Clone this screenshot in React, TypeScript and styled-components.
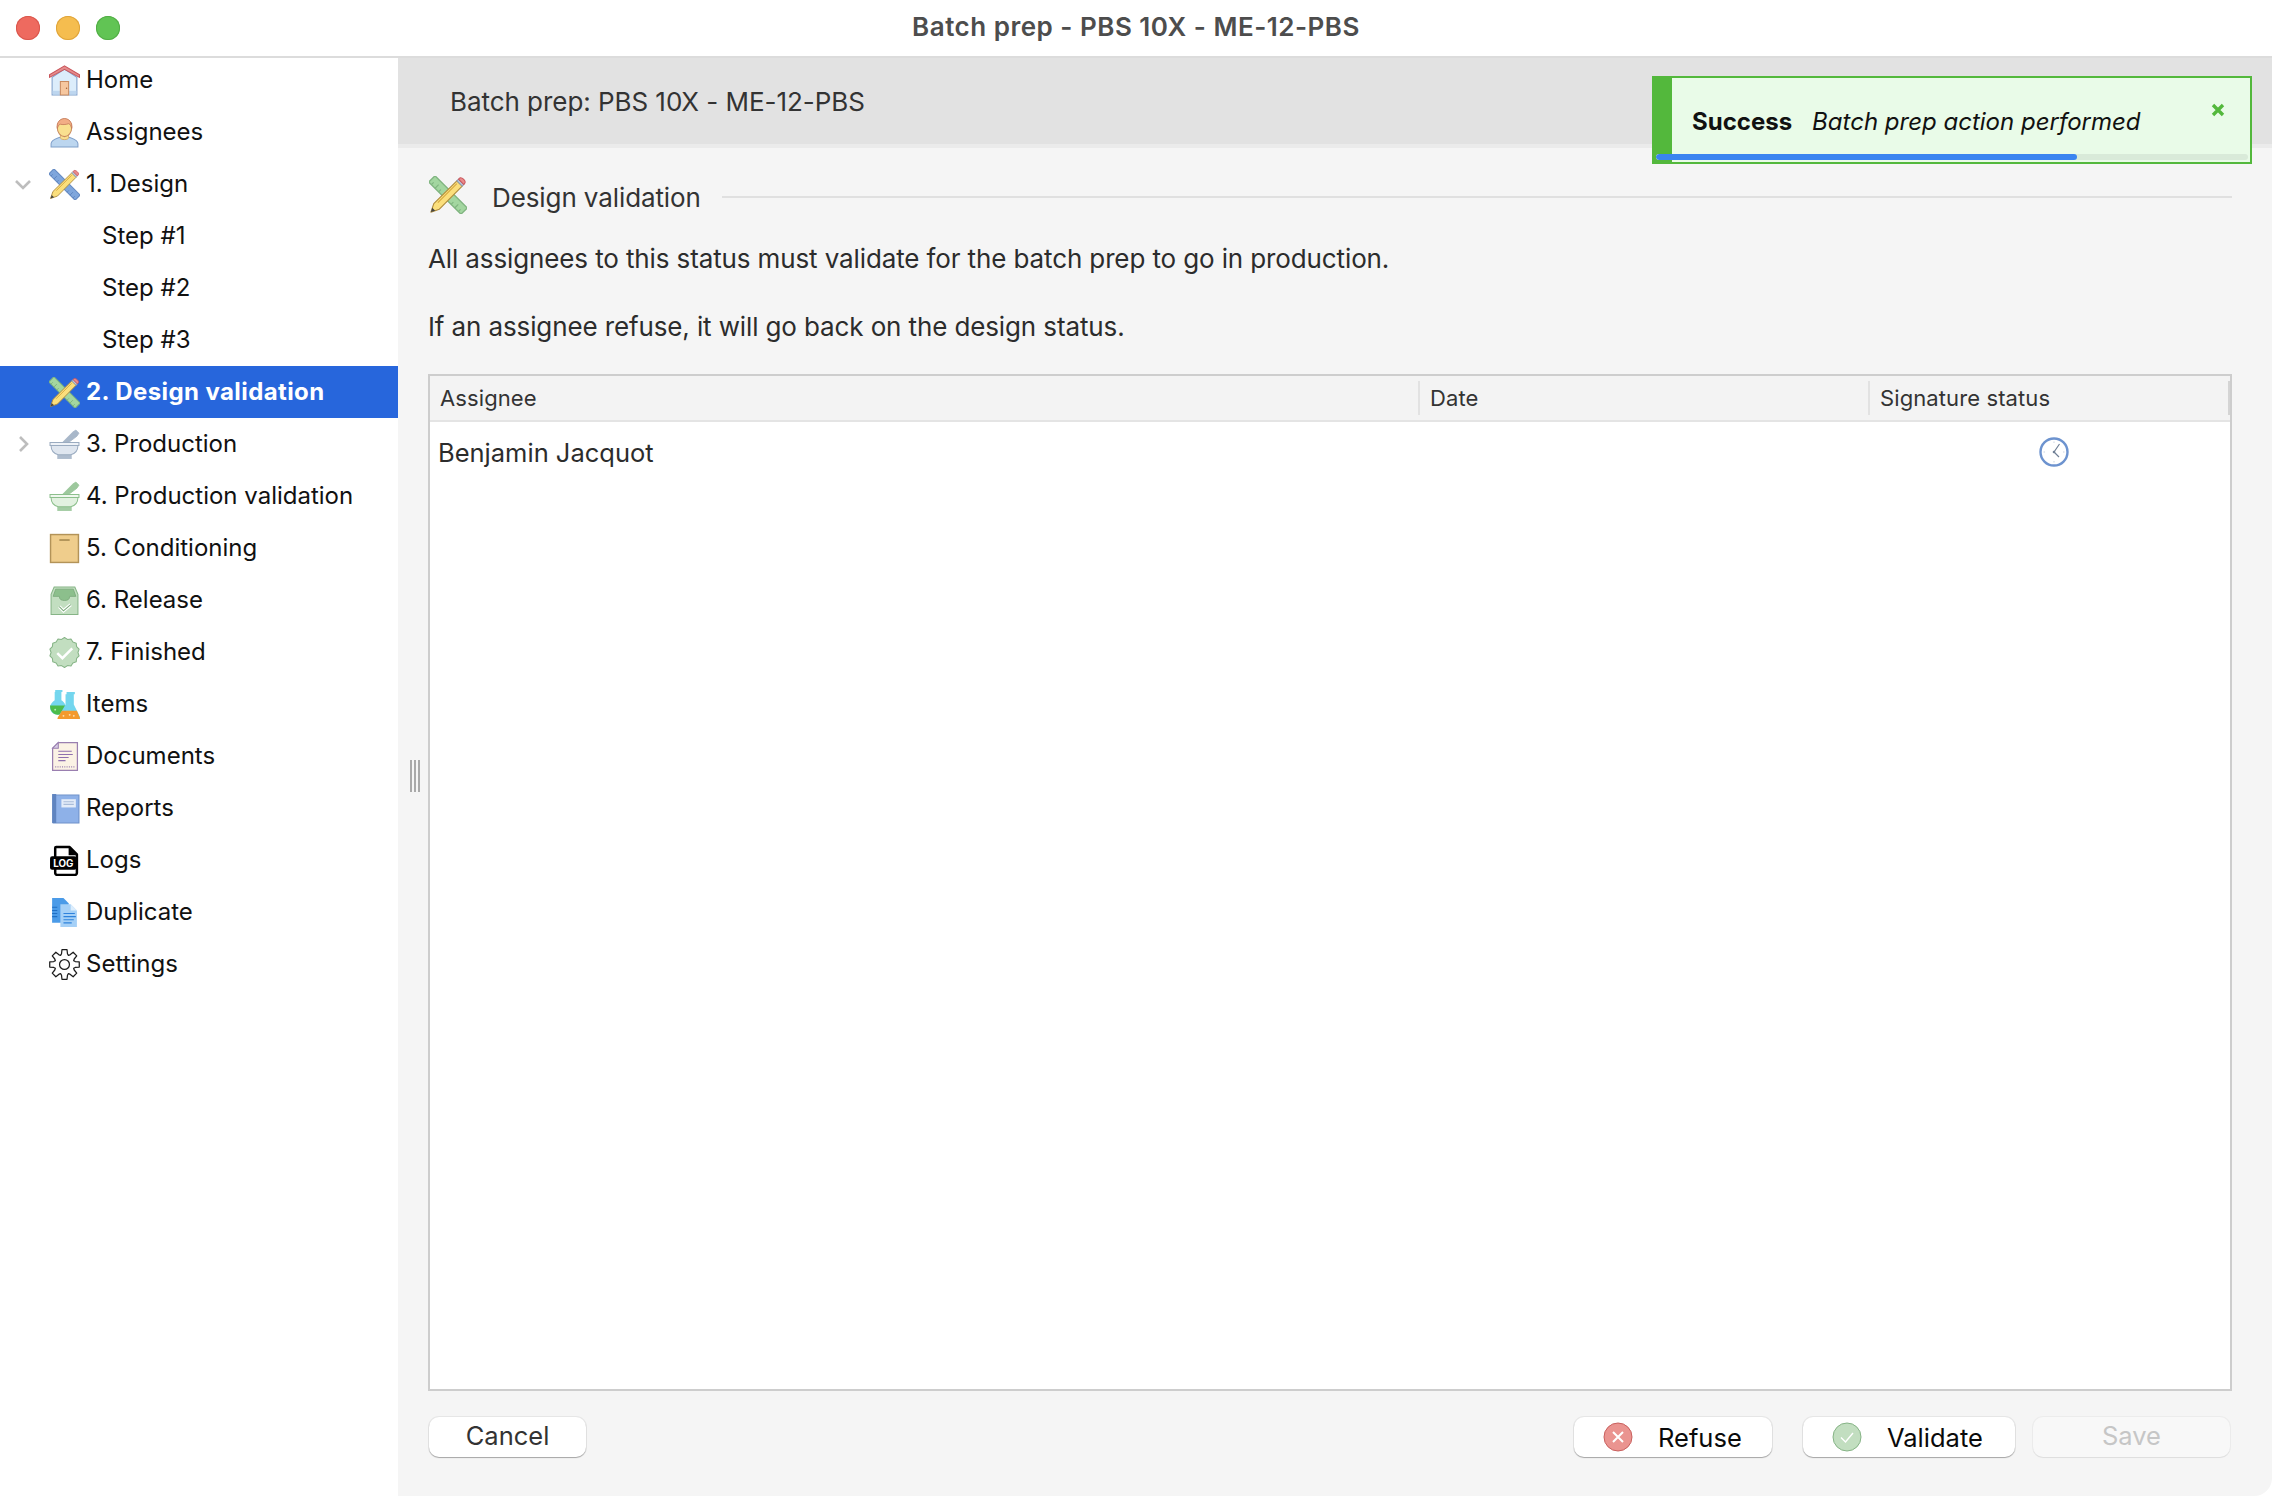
import React from "react";
import styled, { createGlobalStyle } from "styled-components";

const Global = createGlobalStyle`
  html, body { margin: 0; padding: 0; background: #fff; }
  body { font-family: Inter, "Liberation Sans", sans-serif; -webkit-font-smoothing: antialiased; }
`;

const Window = styled.div`
  position: relative;
  width: 2272px;
  height: 1496px;
  display: flex;
  flex-direction: column;
  overflow: hidden;
  background: #fff;
`;
const TitleBar = styled.header`
  flex: none;
  height: 56px;
  position: relative;
  display: flex;
  align-items: center;
  justify-content: center;
  box-sizing: content-box;
  background: #fff;
  border-bottom: 2px solid #dcdcdc;
`;
const Lights = styled.div`
  position: absolute;
  left: 16px;
  top: 16px;
  display: flex;
  gap: 16px;
`;
const Light = styled.span<{ $c: string; $b: string }>`
  width: 24px;
  height: 24px;
  border-radius: 50%;
  background: ${(p) => p.$c};
  box-shadow: inset 0 0 0 1px ${(p) => p.$b};
`;
const Title = styled.h1`
  margin: 0 0 3px;
  font-size: 26px;
  font-weight: 600;
  letter-spacing: 0.5px;
  color: #4d4d4d;
`;
const Body = styled.div`
  flex: 1;
  min-height: 0;
  display: flex;
`;
const Sidebar = styled.nav`
  flex: none;
  width: 398px;
  background: #fff;
`;
const Row = styled.div<{ $sel?: boolean }>`
  position: relative;
  height: 52px;
  display: flex;
  align-items: center;
  gap: 6px;
  padding-left: 49px;
  box-sizing: border-box;
  font-size: 24px;
  color: ${(p) => (p.$sel ? "#fff" : "#111")};
  font-weight: ${(p) => (p.$sel ? 700 : 400)};
  letter-spacing: ${(p) => (p.$sel ? "0.4px" : "0")};
  background: ${(p) => (p.$sel ? "#2766dc" : "transparent")};
  &:first-child {
    height: 48px;
    padding-bottom: 4px;
  }
`;
const Label = styled.span`
  padding-bottom: 1.5px;
`;
const StepRow = styled(Row)`
  padding-left: 102px;
`;
const Chevron = styled.svg`
  position: absolute;
  left: 13px;
  top: 16px;
  width: 20px;
  height: 20px;
  fill: none;
  stroke: #bdbdbd;
  stroke-width: 2.6;
`;
const Ico = styled.svg`
  flex: none;
  width: 31px;
  height: 31px;
`;
const Main = styled.main`
  position: relative;
  flex: 1;
  min-width: 0;
  display: flex;
  flex-direction: column;
  background: #f5f5f5;
  border-bottom-right-radius: 18px;
`;
const Header = styled.div`
  flex: none;
  height: 86px;
  display: flex;
  align-items: center;
  padding-left: 52px;
  background: #e2e2e2;
  border-bottom: 4px solid #ebebeb;
  font-size: 26px;
  letter-spacing: -0.05px;
  color: #333;
`;
const Content = styled.div`
  flex: 1;
  min-height: 0;
  display: flex;
  flex-direction: column;
  padding: 29px 40px 39px 30px;
`;
const Section = styled.div`
  flex: none;
  display: flex;
  align-items: center;
  height: 36px;
`;
const SectionIcon = styled(Ico)`
  width: 38px;
  height: 38px;
  margin-left: 1px;
`;
const SectionTitle = styled.span`
  margin-left: 25px;
  padding-top: 5px;
  font-size: 26px;
  letter-spacing: -0.1px;
  color: #333;
`;
const Rule = styled.span`
  flex: 1;
  height: 2px;
  margin: 4px 0 0 21px;
  background: #e0e0e0;
`;
const Para = styled.p<{ $gap: number }>`
  margin: ${(p) => p.$gap}px 0 0;
  height: 36px;
  line-height: 36px;
  font-size: 26px;
  letter-spacing: -0.12px;
  color: #2c2c2c;
`;
const Table = styled.div`
  flex: 1;
  min-height: 0;
  margin-top: 29px;
  border: 2px solid #cdcdcd;
  background: #fff;
  display: flex;
  flex-direction: column;
`;
const THead = styled.div`
  flex: none;
  height: 44px;
  display: grid;
  grid-template-columns: 988px 450px 1fr;
  align-items: center;
  background: #f3f3f3;
  border-bottom: 2px solid #e4e4e4;
`;
const Th = styled.div<{ $first?: boolean }>`
  height: 34px;
  display: flex;
  align-items: center;
  font-size: 22px;
  letter-spacing: 0.1px;
  color: #333;
  padding-left: 10px;
  border-left: ${(p) => (p.$first ? "none" : "2px solid #e2e2e2")};
`;
const LastTh = styled(Th)`
  border-right: 2px solid #d4d4d4;
`;
const TRow = styled.div`
  height: 60px;
  display: grid;
  grid-template-columns: 988px 450px 1fr;
  align-items: center;
`;
const Name = styled.div`
  padding-left: 8px;
  font-size: 25.5px;
  color: #2c2c2c;
`;
const StatusCell = styled.div`
  display: flex;
  justify-content: center;
  padding-left: 9px;
`;
const Footer = styled.div`
  flex: none;
  display: flex;
  margin-top: 26px;
  padding: 0 2px 0 1px;
`;
const Btn = styled.button<{ $w: number; $off?: boolean; $gap?: number }>`
  width: ${(p) => p.$w}px;
  height: 40px;
  margin-left: ${(p) => p.$gap ?? 0}px;
  border: none;
  border-radius: 10px;
  background: ${(p) => (p.$off ? "#f8f8f8" : "#fff")};
  box-shadow: ${(p) =>
    p.$off
      ? "0 0 0 1px rgba(0,0,0,.035), 0 1px 1px rgba(0,0,0,.06)"
      : "0 0 0 1px rgba(0,0,0,.06), 0 1px 1px rgba(0,0,0,.28)"};
  font: inherit;
  font-size: 25.5px;
  color: ${(p) => (p.$off ? "#c6c6c6" : "#333")};
  padding: 0 0 4px;
`;
const CancelBtn = styled(Btn)`
  margin-right: auto;
  padding-bottom: 3px;
`;
const IconBtn = styled(Btn)`
  display: flex;
  align-items: center;
  gap: 25px;
  padding: 0 0 0 29px;
  color: #0a0a0a;
`;
const RoundIco = styled.svg`
  flex: none;
  width: 30px;
  height: 30px;
`;
const Toast = styled.div`
  position: absolute;
  top: 18px;
  right: 20px;
  width: 600px;
  height: 88px;
  box-sizing: border-box;
  border: 2px solid #53b83c;
  border-left: 20px solid #53b83c;
  background: #e9fbe8;
  display: flex;
  align-items: center;
  padding: 2px 0 0 20px;
  font-size: 24px;
  color: #111;
`;
const ToastTitle = styled.strong`
  font-weight: 700;
  margin-right: 20px;
`;
const ToastText = styled.em`
  font-style: italic;
`;
const ToastClose = styled.svg`
  position: absolute;
  top: 25px;
  right: 25px;
  width: 14px;
  height: 14px;
  stroke: #53b83c;
  stroke-width: 3.4;
`;
const Track = styled.div`
  position: absolute;
  left: -16px;
  right: 2px;
  bottom: 2px;
  height: 6px;
  border-radius: 3px;
  background: #d9ead9;
  overflow: hidden;
`;
const Fill = styled.div`
  height: 100%;
  border-radius: 3px;
  background: #3a84f0;
`;
const Handle = styled.div`
  position: absolute;
  left: 12px;
  top: 702px;
  width: 6px;
  height: 32px;
  border-left: 2px solid #a9a9a9;
  border-right: 2px solid #a9a9a9;
  &::after {
    content: "";
    display: block;
    width: 2px;
    height: 100%;
    margin-left: 2px;
    background: #a9a9a9;
  }
`;

const HomeIcon = () => (
  <Ico viewBox="0 0 30 30">
    <path d="M3 12V29h24V12L15 4z" fill="#dcedfb" stroke="#7f9fca" strokeWidth="1" />
    <path d="M3.500 25h23v3.500h-23z" fill="#bdd6ef" />
    <path d="M11 16h8v13h-8z" fill="#f6c79f" stroke="#c98a5f" strokeWidth="1" />
    <circle cx="17" cy="22.500" r=".7" fill="#a05f3a" />
    <path d="M.5 12V9.500L15 .8 29.500 9.500V12L15 4.200z" fill="#e58d8d" stroke="#c9545a" strokeWidth="1" strokeLinejoin="round" />
  </Ico>
);
const PersonIcon = () => (
  <Ico viewBox="0 0 30 30">
    <path d="M2 29v-3c0-4 5-5 9-6.500h8c4 1.500 9 2.500 9 6.500v3z" fill="#bcd6ef" stroke="#7f9fca" strokeWidth="1" />
    <path d="M11 17v3c0 2.500 8 2.500 8 0v-3z" fill="#f9e08f" stroke="#d6a860" strokeWidth=".8" />
    <path d="M8 10c0-5 3-8 7-8s7 3 7 8c0 5-3 9-7 9s-7-4-7-9z" fill="#f9e08f" stroke="#c98a5f" strokeWidth="1" />
    <path d="M8 11c-1-6 3-9.500 7-9.500s8 3.500 7 9.500c-1-2-1-4-3-4.500-3 1-6 1-8 .5-2 .5-2 2-3 4z" fill="#f2ad85" stroke="#c57b5a" strokeWidth=".8" />
  </Ico>
);
const DesignIcon = ({ c, s, big }: { c: string; s: string; big?: boolean }) => {
  const I = big ? SectionIcon : Ico;
  return (
    <I viewBox="0 0 30 30">
      <g transform="rotate(-45 15 15)">
        <rect x="11.500" y="-3" width="7" height="36" fill={c} stroke={s} strokeWidth="1" />
        <path d="M11.500 0h2.500M11.500 4h4M11.500 8h2.500M11.500 22h2.500M11.500 26h4M11.500 30h2.500" stroke={s} strokeWidth=".9" />
      </g>
      <path d="M1.500 28.500l2.300-6.700L22 3.800l4.200 4.200L8.200 26.200z" fill="#fbdf7c" stroke="#b08d3e" strokeWidth=".9" strokeLinejoin="round" />
      <path d="M1.500 28.500l1.100-3.400 2.300 2.300z" fill="#444" />
      <path d="M22 3.800l4.200 4.200 1.300-1.300-4.200-4.200z" fill="#b9c9dc" stroke="#8d9bb0" strokeWidth=".8" />
      <path d="M23.300 2.500l4.200 4.200 1-1.300c.7-1.500-2.200-4.500-4.200-3.900z" fill="#ea8a8a" stroke="#c9545a" strokeWidth=".8" />
      <path d="M7 21L22 6" stroke="#d8a93f" strokeWidth=".9" />
    </I>
  );
};
const MortarIcon = ({ f, l, s }: { f: string; l: string; s: string }) => (
  <Ico viewBox="0 0 30 30">
    <path d="M13 13l10-10 3-2 3 3-2 3-8 6z" fill={s} stroke={s} strokeWidth=".8" strokeLinejoin="round" opacity=".85" />
    <path d="M1 13h28v3H1z" fill={l} stroke={s} strokeWidth="1" />
    <path d="M2 16h26c0 5-3 8-7 9H9c-4-1-7-4-7-9z" fill={f} stroke={s} strokeWidth="1" />
    <path d="M8 25h14v4H8z" fill={s} opacity=".8" />
  </Ico>
);
const BoxIcon = () => (
  <Ico viewBox="0 0 30 30">
    <rect x="1.500" y="1.500" width="27" height="27" fill="#efcd8c" stroke="#b39358" strokeWidth="1.400" />
    <rect x="10" y="6" width="10" height="1.600" fill="#a98c52" />
  </Ico>
);
const ReleaseIcon = () => (
  <Ico viewBox="0 0 30 30">
    <path d="M5 2h20l3 7v19.500H2V9z" fill="#c2dec0" stroke="#86b486" strokeWidth="1" />
    <path d="M4 11l2.500-7h17L26 11h-6c0 3-2 4-5 4s-5-1-5-4z" fill="#8cbf8c" stroke="#7aa97a" strokeWidth=".8" />
    <path d="M10 21l4 4 7-6" fill="none" stroke="#fff" strokeWidth="3.200" />
    <path d="M10 21l4 4 7-6" fill="none" stroke="#78a878" strokeWidth="1" />
  </Ico>
);
const scallop = (n: number, R: number, r: number) => {
  let d = "";
  for (let i = 0; i < n * 2; i++) {
    const a = (i * Math.PI) / n;
    const q = i % 2 ? r : R;
    d += (i ? "L" : "M") + (15 + q * Math.sin(a)).toFixed(2) + " " + (15 - q * Math.cos(a)).toFixed(2);
  }
  return d + "z";
};
const FinishedIcon = () => (
  <Ico viewBox="0 0 30 30">
    <path d={scallop(14, 14.500, 13)} fill="#c2dec0" stroke="#86b486" strokeWidth="1" strokeLinejoin="round" />
    <path d="M8 15.500l5 5 9.500-9.500" fill="none" stroke="#fff" strokeWidth="2.400" />
  </Ico>
);
const FlasksIcon = () => (
  <Ico viewBox="0 0 30 30">
    <path d="M6 1h7v2h-1v8c3 2 5 5 4 9-1 4-4 5-7 5-5 0-8-3-8-7 0-3 2-5 4.500-7V3H6z" fill="#74d6ee" />
    <path d="M1 16h15c1 5-3 9-7.500 9C4 25 1 21 1 16z" fill="#4cbc4c" />
    <path d="M17 3h8v2h-1v10l6 12c.5 1.500 0 2-1 2H10c-1 0-1.500-.5-1-2l7-12V5h1z" fill="#74d6ee" />
    <path d="M12.500 21h14.500l3 7c0 1-.5 1-1 1H9c-1 0-1-.5-.5-1.500z" fill="#f39a2e" />
    <circle cx="14" cy="26" r=".9" fill="#fbe0b0" />
    <circle cx="20" cy="25" r=".9" fill="#fbe0b0" />
    <circle cx="24" cy="26" r=".9" fill="#fbe0b0" />
    <circle cx="6" cy="20" r=".9" fill="#bdeebd" />
  </Ico>
);
const DocIcon = () => (
  <Ico viewBox="0 0 30 30">
    <path d="M9 1.500h18.500v27h-24V7z" fill="#fbf2e5" stroke="#9a7fb0" strokeWidth="1.200" />
    <path d="M9 1.500V7H3.500z" fill="#d9cfe6" stroke="#9a7fb0" strokeWidth="1" />
    <path d="M9 10h13M9 13h14M9 16h10M9 19h7" stroke="#8e6fae" strokeWidth="1" />
    <path d="M6 25h19" stroke="#9a7fb0" strokeWidth="1.200" strokeDasharray="1 1.200" />
  </Ico>
);
const BookIcon = () => (
  <Ico viewBox="0 0 30 30">
    <path d="M4 2h25v27H4z" fill="#8eb1e8" stroke="#6c8fc9" strokeWidth="1" />
    <path d="M3 1h4v28H3z" fill="#5f84c0" />
    <path d="M12 6h14v8H12z" fill="#e4ecf8" />
    <path d="M14 8.500h10M14 11h10" stroke="#a9bcd9" strokeWidth="1" />
  </Ico>
);
const LogIcon = () => (
  <Ico viewBox="0 0 30 30">
    <path d="M7 2h13l7 7v18c0 1-1 2-2 2H8c-1 0-2-1-2-2V3c0-.5.500-1 1-1z" fill="#fff" stroke="#000" strokeWidth="2.400" strokeLinejoin="round" />
    <path d="M19 2v8h8z" fill="#000" />
    <rect x="1" y="11" width="25.500" height="13" rx="2" fill="#000" />
    <text x="13.800" y="21" textAnchor="middle" fontFamily="Inter, sans-serif" fontWeight="700" fontSize="9.500" fill="#fff">LOG</text>
  </Ico>
);
const DuplicateIcon = () => (
  <Ico viewBox="0 0 30 30">
    <path d="M3 1h11l5 5v19H3z" fill="#4b9be8" />
    <path d="M3 10h5M3 13h5M3 16h5M3 19h5" stroke="#1f6fc4" strokeWidth="1" />
    <path d="M11 7h10l6 6v16H11z" fill="#a5d0f7" />
    <path d="M21 7l6 6h-6z" fill="#dcedfc" />
    <path d="M14 16h11M14 19h12M14 22h10M14 25h8" stroke="#2f82dc" strokeWidth="1.100" />
  </Ico>
);
const gear = () => {
  const n = 8;
  const pts: string[] = [];
  for (let i = 0; i < n; i++) {
    const c = (i * 2 * Math.PI) / n;
    const add = (a: number, r: number) =>
      pts.push((15 + r * Math.sin(a)).toFixed(2) + " " + (15 - r * Math.cos(a)).toFixed(2));
    add(c - 0.17, 14.500);
    add(c + 0.17, 14.500);
    add(c + 0.27, 10.800);
    add(c + Math.PI / n, 9.600);
    add(c + (2 * Math.PI) / n - 0.27, 10.800);
  }
  return "M" + pts.join("L") + "z";
};
const GearIcon = () => (
  <Ico viewBox="0 0 30 30">
    <path d={gear()} fill="none" stroke="#1c1c1c" strokeWidth="1.200" strokeLinejoin="round" />
    <circle cx="15" cy="15" r="4.800" fill="none" stroke="#1c1c1c" strokeWidth="1.200" />
  </Ico>
);
const ClockIcon = () => (
  <RoundIco viewBox="0 0 30 30">
    <circle cx="15" cy="15" r="13.500" fill="#fff" stroke="#6d93cf" strokeWidth="2.400" />
    <path d="M15 15l5.500-8M15 15l5 5" stroke="#6f7f95" strokeWidth="1.200" />
    <circle cx="15" cy="15" r="1.300" fill="#6f7f95" />
    <path d="M15 4.500v1.500M15 24v1.500M4.500 15H6M24 15h1.500" stroke="#c9d3e0" strokeWidth="1" />
  </RoundIco>
);

const App = () => (
  <Window>
    <Global />
    <TitleBar>
      <Lights>
        <Light $c="#ee6a5f" $b="#d9574d" />
        <Light $c="#f5bd4f" $b="#dfa43b" />
        <Light $c="#61c454" $b="#52ad46" />
      </Lights>
      <Title>Batch prep - PBS 10X - ME-12-PBS</Title>
    </TitleBar>
    <Body>
      <Sidebar>
        <Row>
          <HomeIcon />
          <Label>Home</Label>
        </Row>
        <Row>
          <PersonIcon />
          <Label>Assignees</Label>
        </Row>
        <Row>
          <Chevron viewBox="0 0 20 20">
            <path d="M3 7l7 7 7-7" />
          </Chevron>
          <DesignIcon c="#7fa6dc" s="#5f86c0" />
          <Label>1. Design</Label>
        </Row>
        <StepRow>
          <Label>Step #1</Label>
        </StepRow>
        <StepRow>
          <Label>Step #2</Label>
        </StepRow>
        <StepRow>
          <Label>Step #3</Label>
        </StepRow>
        <Row $sel>
          <DesignIcon c="#a3d6a0" s="#7fb47f" />
          <Label>2. Design validation</Label>
        </Row>
        <Row>
          <Chevron viewBox="0 0 20 20">
            <path d="M7 3l7 7-7 7" />
          </Chevron>
          <MortarIcon f="#dfe6ef" l="#eef2f7" s="#9aabc0" />
          <Label>3. Production</Label>
        </Row>
        <Row>
          <MortarIcon f="#e2f1e0" l="#eff8ee" s="#8cbf8c" />
          <Label>4. Production validation</Label>
        </Row>
        <Row>
          <BoxIcon />
          <Label>5. Conditioning</Label>
        </Row>
        <Row>
          <ReleaseIcon />
          <Label>6. Release</Label>
        </Row>
        <Row>
          <FinishedIcon />
          <Label>7. Finished</Label>
        </Row>
        <Row>
          <FlasksIcon />
          <Label>Items</Label>
        </Row>
        <Row>
          <DocIcon />
          <Label>Documents</Label>
        </Row>
        <Row>
          <BookIcon />
          <Label>Reports</Label>
        </Row>
        <Row>
          <LogIcon />
          <Label>Logs</Label>
        </Row>
        <Row>
          <DuplicateIcon />
          <Label>Duplicate</Label>
        </Row>
        <Row>
          <GearIcon />
          <Label>Settings</Label>
        </Row>
      </Sidebar>
      <Main>
        <Header>Batch prep: PBS 10X - ME-12-PBS</Header>
        <Handle />
        <Content>
          <Section>
            <DesignIcon c="#a3d6a0" s="#7fb47f" big />
            <SectionTitle>Design validation</SectionTitle>
            <Rule />
          </Section>
          <Para $gap={28}>All assignees to this status must validate for the batch prep to go in production.</Para>
          <Para $gap={32}>If an assignee refuse, it will go back on the design status.</Para>
          <Table>
            <THead>
              <Th $first>Assignee</Th>
              <Th>Date</Th>
              <LastTh>Signature status</LastTh>
            </THead>
            <TRow>
              <Name>Benjamin Jacquot</Name>
              <div />
              <StatusCell>
                <ClockIcon />
              </StatusCell>
            </TRow>
          </Table>
          <Footer>
            <CancelBtn $w={157}>Cancel</CancelBtn>
            <IconBtn $w={198}>
              <RoundIco viewBox="0 0 30 30">
                <circle cx="15" cy="15" r="14" fill="#ea9490" stroke="#c9605e" strokeWidth="1" />
                <path d="M10 10l10 10M20 10L10 20" stroke="#fff" strokeWidth="2" />
              </RoundIco>
              <span>Refuse</span>
            </IconBtn>
            <IconBtn $w={212} $gap={31}>
              <RoundIco viewBox="0 0 30 30">
                <circle cx="15" cy="15" r="14" fill="#c2dec0" stroke="#86b486" strokeWidth="1" />
                <path d="M9 15.500l4.500 4.500L21 11" fill="none" stroke="#fff" strokeWidth="1.400" />
              </RoundIco>
              <span>Validate</span>
            </IconBtn>
            <Btn $w={197} $gap={18} $off>
              Save
            </Btn>
          </Footer>
        </Content>
        <Toast>
          <ToastTitle>Success</ToastTitle>
          <ToastText>Batch prep action performed</ToastText>
          <ToastClose viewBox="0 0 14 14">
            <path d="M2 2l10 10M12 2L2 12" />
          </ToastClose>
          <Track>
            <Fill style={{ width: `${(421 / 592) * 100}%` }} />
          </Track>
        </Toast>
      </Main>
    </Body>
  </Window>
);

export default App;
